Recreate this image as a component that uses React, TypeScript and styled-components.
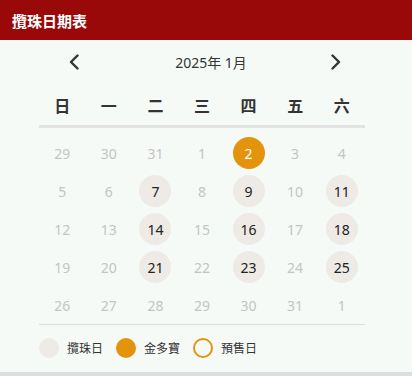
import styled, { createGlobalStyle } from 'styled-components';

const GlobalStyle = createGlobalStyle`
  html, body {
    margin: 0;
    padding: 0;
    background-color: #dedede;
  }
  body {
    font-family: "Noto Sans", "Noto Sans CJK TC", sans-serif;
  }
`;

const Card = styled.div`
  width: 412px;
  height: 372px;
  background-color: #f6faf7;
  display: flex;
  flex-direction: column;
`;

const Header = styled.div`
  height: 40px;
  background-color: #990909;
  display: flex;
  align-items: center;
  padding-left: 12px;
  color: #fff;
  font-size: 15px;
  font-weight: 700;
`;

const Body = styled.div`
  width: 326px;
  margin-left: 39px;
  display: flex;
  flex-direction: column;
`;

const NavRow = styled.div`
  height: 44px;
  display: flex;
  align-items: center;
  padding: 0 24px 0 30px;
`;

const NavButton = styled.button`
  border: none;
  background: none;
  padding: 0;
  width: 10px;
  height: 16px;
  display: flex;
  align-items: center;
  justify-content: center;
  cursor: pointer;
`;

const MonthLabel = styled.div`
  flex: 1;
  text-align: center;
  padding-left: 12px;
  font-size: 14px;
  color: #333;
`;

const WeekRow = styled.div`
  display: grid;
  grid-template-columns: repeat(7, 1fr);
  height: 41px;
  align-items: center;
`;

const WeekDay = styled.div`
  text-align: center;
  font-size: 16px;
  font-weight: 700;
  color: #333;
`;

const HeadDivider = styled.div`
  height: 3px;
  background-color: #e3e3e3;
  box-shadow: 0 3px 3px -2px rgba(0, 0, 0, 0.12);
`;

const DateGrid = styled.div`
  margin-top: 6px;
  display: grid;
  grid-template-columns: repeat(7, 1fr);
  grid-auto-rows: 38px;
  border-bottom: 1px solid #dcdcdc;
`;

const Cell = styled.div`
  display: flex;
  align-items: center;
  justify-content: center;
`;

type Kind = 'none' | 'draw' | 'jackpot';

const Day = styled.div<{ $kind: Kind; $muted: boolean }>`
  width: 32px;
  height: 32px;
  border-radius: 50%;
  display: flex;
  align-items: center;
  justify-content: center;
  font-size: 14px;
  background-color: ${(p) =>
    p.$kind === 'jackpot' ? '#e3940c' : p.$kind === 'draw' ? '#eeeae6' : 'transparent'};
  color: ${(p) => (p.$kind === 'jackpot' ? '#fff' : p.$muted ? '#c4c4c4' : '#222')};
`;

const Legend = styled.div`
  display: flex;
  align-items: center;
  gap: 13px;
  padding-top: 13px;
`;

const LegendItem = styled.div`
  display: flex;
  align-items: center;
  gap: 8px;
  font-size: 12px;
  color: #333;
`;

const Dot = styled.span<{ $variant: 'draw' | 'jackpot' | 'presale' }>`
  width: 20px;
  height: 20px;
  box-sizing: border-box;
  border-radius: 50%;
  background-color: ${(p) =>
    p.$variant === 'draw' ? '#eeeae6' : p.$variant === 'jackpot' ? '#e3940c' : 'transparent'};
  border: ${(p) => (p.$variant === 'presale' ? '2px solid #e3940c' : 'none')};
`;

const weekdays = ['日', '一', '二', '三', '四', '五', '六'];

const days: { n: number; cur: boolean }[] = [
  ...[29, 30, 31].map((n) => ({ n, cur: false })),
  ...Array.from({ length: 31 }, (_, i) => ({ n: i + 1, cur: true })),
  { n: 1, cur: false },
];

const drawDays = [7, 9, 11, 14, 16, 18, 21, 23, 25];
const jackpotDays = [2];

function Chevron({ dir }: { dir: 'left' | 'right' }) {
  return (
    <svg width="10" height="16" viewBox="0 0 10 16" fill="none">
      <polyline
        points={dir === 'left' ? '8.5,1.5 2,8 8.5,14.5' : '1.5,1.5 8,8 1.5,14.5'}
        stroke="#333"
        strokeWidth="2.4"
        strokeLinecap="round"
        strokeLinejoin="round"
      />
    </svg>
  );
}

export default function App() {
  return (
    <>
      <GlobalStyle />
      <Card>
        <Header>攬珠日期表</Header>
        <Body>
          <NavRow>
            <NavButton aria-label="上一月">
              <Chevron dir="left" />
            </NavButton>
            <MonthLabel>2025年 1月</MonthLabel>
            <NavButton aria-label="下一月">
              <Chevron dir="right" />
            </NavButton>
          </NavRow>
          <WeekRow>
            {weekdays.map((w) => (
              <WeekDay key={w}>{w}</WeekDay>
            ))}
          </WeekRow>
          <HeadDivider />
          <DateGrid>
            {days.map((d, i) => {
              let kind: Kind = 'none';
              if (d.cur && jackpotDays.includes(d.n)) kind = 'jackpot';
              else if (d.cur && drawDays.includes(d.n)) kind = 'draw';
              return (
                <Cell key={i}>
                  <Day $kind={kind} $muted={kind === 'none'}>
                    {d.n}
                  </Day>
                </Cell>
              );
            })}
          </DateGrid>
          <Legend>
            <LegendItem>
              <Dot $variant="draw" />
              攬珠日
            </LegendItem>
            <LegendItem>
              <Dot $variant="jackpot" />
              金多寶
            </LegendItem>
            <LegendItem>
              <Dot $variant="presale" />
              預售日
            </LegendItem>
          </Legend>
        </Body>
      </Card>
    </>
  );
}
